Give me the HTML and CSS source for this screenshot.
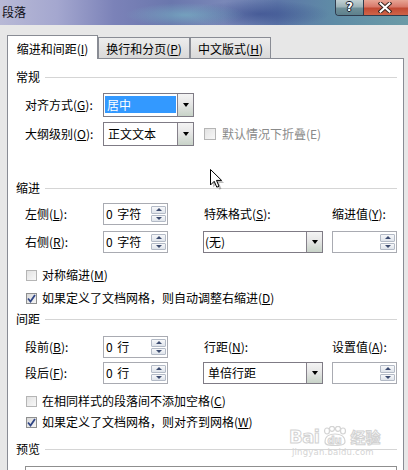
FILE: index.html
```html
<!DOCTYPE html>
<html lang="zh-CN">
<head>
<meta charset="utf-8">
<title>段落</title>
<link rel="stylesheet" href="styles.css">
</head>
<body>
<div class="titlebar">
  <span class="title">段落</span>
  <div class="controls">
    <div class="btn-help">?</div>
    <div class="btn-close">
      <svg width="14" height="11" viewBox="0 0 14 11">
        <path d="M2.5 1.5 L11.5 9.5 M11.5 1.5 L2.5 9.5" stroke="#3a2620" stroke-width="4" stroke-linecap="square"/>
        <path d="M2.5 1.5 L11.5 9.5 M11.5 1.5 L2.5 9.5" stroke="#fff" stroke-width="2" stroke-linecap="square"/>
      </svg>
    </div>
  </div>
</div>
<div class="client">
  <div class="tabs">
    <div class="tab active t1">缩进和间距(<u>I</u>)</div>
    <div class="tab t2">换行和分页(<u>P</u>)</div>
    <div class="tab t3">中文版式(<u>H</u>)</div>
  </div>
  <div class="panel">
    <div class="group g1"><span>常规</span></div>
    <div class="row r1">
      <span class="lbl">对齐方式(<u>G</u>):</span>
      <div class="combo w91"><span class="val selected">居中</span><span class="drop"><i></i></span></div>
    </div>
    <div class="row r2">
      <span class="lbl">大纲级别(<u>O</u>):</span>
      <div class="combo w91"><span class="val">正文文本</span><span class="drop"><i></i></span></div>
      <span class="cb disabled"></span>
      <span class="cbtext dis">默认情况下折叠(E)</span>
    </div>

    <div class="group g2"><span>缩进</span></div>
    <div class="fields f1">
      <span class="lbl">左侧(<u>L</u>):</span>
      <div class="spin"><span class="sv">0 字符</span><span class="sb"><b class="up"><i></i></b><b class="dn"><i></i></b></span></div>
      <span class="lbl c3">特殊格式(<u>S</u>):</span>
      <span class="lbl">缩进值(<u>Y</u>):</span>
      <span class="lbl">右侧(<u>R</u>):</span>
      <div class="spin"><span class="sv">0 字符</span><span class="sb"><b class="up"><i></i></b><b class="dn"><i></i></b></span></div>
      <div class="combo w120"><span class="val">(无)</span><span class="drop"><i></i></span></div>
      <div class="spin"><span class="sv"></span><span class="sb"><b class="up"><i></i></b><b class="dn"><i></i></b></span></div>
    </div>
    <div class="check c1"><span class="cb disabled"></span><span class="cbtext">对称缩进(<u>M</u>)</span></div>
    <div class="check c2"><span class="cb checked"><svg width="9" height="9" viewBox="0 0 9 9"><path d="M1 4.5 L3.5 7.5 L8 1" fill="none" stroke="#2f4585" stroke-width="1.8"/></svg></span><span class="cbtext">如果定义了文档网格，则自动调整右缩进(<u>D</u>)</span></div>

    <div class="group g3"><span>间距</span></div>
    <div class="fields f2">
      <span class="lbl">段前(<u>B</u>):</span>
      <div class="spin"><span class="sv">0 行</span><span class="sb"><b class="up"><i></i></b><b class="dn"><i></i></b></span></div>
      <span class="lbl c3">行距(<u>N</u>):</span>
      <span class="lbl">设置值(<u>A</u>):</span>
      <span class="lbl">段后(<u>F</u>):</span>
      <div class="spin"><span class="sv">0 行</span><span class="sb"><b class="up"><i></i></b><b class="dn"><i></i></b></span></div>
      <div class="combo w120"><span class="val v2">单倍行距</span><span class="drop"><i></i></span></div>
      <div class="spin"><span class="sv"></span><span class="sb"><b class="up"><i></i></b><b class="dn"><i></i></b></span></div>
    </div>
    <div class="check c3b"><span class="cb disabled"></span><span class="cbtext">在相同样式的段落间不添加空格(<u>C</u>)</span></div>
    <div class="check c4"><span class="cb checked"><svg width="9" height="9" viewBox="0 0 9 9"><path d="M1 4.5 L3.5 7.5 L8 1" fill="none" stroke="#2f4585" stroke-width="1.8"/></svg></span><span class="cbtext">如果定义了文档网格，则对齐到网格(<u>W</u>)</span></div>

    <div class="group g4"><span>预览</span></div>
    <div class="preview"></div>
  </div>
</div>

<svg class="cursor" width="16" height="22" viewBox="0 0 16 22">
  <path d="M2.5 2.5 L2.5 18 L6.2 14.3 L8.8 20.2 L11 19.2 L8.5 13.4 L13.6 13.4 Z" fill="#000" opacity="0.25" transform="translate(1.5,1.5)"/>
  <path d="M1.5 1.5 L1.5 17 L5.2 13.3 L7.8 19.2 L10 18.2 L7.5 12.4 L12.6 12.4 Z" fill="#fff" stroke="#000" stroke-width="1" stroke-linejoin="miter"/>
</svg>

<div class="watermark">
  <div class="wm-top">
    <span class="wm-bai">Bai</span>
    <span class="wm-paw">
      <svg width="28" height="20" viewBox="0 0 28 20">
        <g fill="#fff" stroke="#d4d4d4" stroke-width="1.2">
          <ellipse cx="6" cy="5" rx="2.5" ry="3"/>
          <ellipse cx="11" cy="2.8" rx="2.5" ry="2.5"/>
          <ellipse cx="17" cy="2.8" rx="2.5" ry="2.5"/>
          <ellipse cx="22" cy="5" rx="2.5" ry="3"/>
          <path d="M4 16 C4 10 9 8 14 8 C19 8 24 10 24 16 C24 19 20 19.5 14 19.5 C8 19.5 4 19 4 16 Z"/>
        </g>
      </svg>
      <span class="wm-du">du</span>
    </span>
    <span class="wm-jy">经验</span>
  </div>
  <div class="wm-url">jingyan.baidu.com</div>
</div>
</body>
</html>
```

FILE: styles.css
```css
* { box-sizing: border-box; }
html, body { margin: 0; padding: 0; }
body {
  width: 408px;
  height: 470px;
  overflow: hidden;
  position: relative;
  background: #e7e7e7;
  font-family: "Noto Sans CJK SC", "Noto Sans", sans-serif;
  font-size: 12px;
  color: #000;
}
u { text-decoration: underline; text-underline-offset: 1px; }

/* title bar */
.titlebar {
  height: 25px;
  display: flex;
  align-items: flex-start;
  background:
    radial-gradient(ellipse 60px 12px at 185px 15px, rgba(120,190,200,0.55), rgba(120,190,200,0) 100%),
    radial-gradient(ellipse 70px 14px at 260px 14px, rgba(40,60,130,0.5), rgba(40,60,130,0) 100%),
    linear-gradient(90deg, #b8b9d6 0%, #a4a7cf 14%, #7b82b8 28%, #6a77ad 42%, #7a88b8 55%, #5d76a8 68%, #5f8ca6 82%, #6b9ba7 100%);
}
.title {
  line-height: 24px;
  padding-left: 2px;
  color: #101018;
  font-size: 12px;
}
.controls {
  margin-left: auto;
  display: flex;
  height: 16px;
  border: 1px solid #2f3b4d;
  border-top: none;
  border-right: none;
  border-radius: 0 0 0 4px;
  overflow: hidden;
}
.btn-help {
  width: 28px;
  background: linear-gradient(#c1d0d3 0%, #9db3b8 45%, #6f8f98 55%, #5d808c 100%);
  color: #fff;
  font-family: "DejaVu Sans", sans-serif;
  font-weight: bold;
  font-size: 12px;
  text-align: center;
  line-height: 15px;
  text-shadow: 0 0 1px #1a2230, 1px 0 0 #1a2230, -1px 0 0 #1a2230, 0 1px 0 #1a2230, 0 -1px 0 #1a2230;
  border-right: 1px solid #2f3b4d;
}
.btn-close {
  width: 44px;
  background: linear-gradient(#e7a595 0%, #d8796a 45%, #c24a34 55%, #cf6448 100%);
  display: flex;
  align-items: center;
  justify-content: center;
  padding-right: 2px;
}

/* client area */
.client {
  padding: 10px 0 0 7px;
}
.tabs {
  display: flex;
  align-items: flex-end;
  height: 23px;
  position: relative;
  z-index: 1;
}
.tab {
  height: 21px;
  border: 1px solid #898c94;
  border-bottom: none;
  background: linear-gradient(#ededed, #d9d9d9);
  display: flex;
  align-items: center;
  justify-content: center;
  line-height: 14px;
  padding-top: 2px;
}
.tab.active {
  height: 24px;
  margin-bottom: -1px;
  background: #fff;
  padding-top: 3px;
}
.t1 { width: 91px; }
.t2 { width: 92px; }
.t3 { width: 81px; }

.panel {
  width: 397px;
  height: 412px;
  overflow: hidden;
  background: #fff;
  border: 1px solid #898c94;
  border-bottom: none;
  padding: 11px 6px 0 8px;
}

.group {
  display: flex;
  align-items: center;
  height: 14px;
  line-height: 14px;
}
.group::after {
  content: "";
  flex: 1;
  height: 1px;
  background: #d5d5d5;
  margin-left: 5px;
}
.g2 { margin-top: 35px; }
.g3 { margin-top: 8px; }
.g4 { margin-top: 14px; }

.row {
  display: flex;
  align-items: center;
  padding-left: 9px;
  height: 24px;
}
.r1 { margin-top: 9px; }
.r2 { margin-top: 5px; }
.row .lbl { width: 78px; flex: none; }
.lbl { line-height: 22px; white-space: nowrap; }

/* combo box */
.combo {
  display: flex;
  height: 24px;
  border: 1px solid #7f7b85;
  background: #fff;
  flex: none;
}
.fields .combo { height: 22px; }
.w91 { width: 91px; }
.w120 { width: 120px; }
.combo .val {
  flex: 1;
  line-height: 17px;
  margin: 2px 1px 3px 1px;
  padding-left: 3px;
  white-space: nowrap;
}
.fields .combo .val { margin: 1px 1px 2px 0; padding-left: 1px; }
.fields .combo .v2 { padding-left: 4px; }
.combo .val.selected {
  background: #3399ff;
  color: #fff;
  padding-left: 2px;
}
.combo .drop {
  width: 16px;
  border-left: 1px solid #85808a;
  background: linear-gradient(#f4f4f4 0%, #e6e6e6 45%, #c8d3c8 100%);
  display: flex;
  align-items: center;
  justify-content: center;
}
.combo .drop i {
  width: 0;
  height: 0;
  border-left: 3.5px solid transparent;
  border-right: 3.5px solid transparent;
  border-top: 4px solid #000;
  margin-top: -1px;
}

/* checkbox */
.cb {
  width: 11px;
  height: 11px;
  border: 1px solid #8e8f8f;
  background: linear-gradient(135deg, #d8d8d8, #f6f6f6);
  display: flex;
  align-items: center;
  justify-content: center;
  flex: none;
}
.cb.disabled {
  border-color: #b5b5b5;
  background: linear-gradient(135deg, #e2e2e2, #f8f8f8);
}
.r2 .cb { margin-left: 10px; width: 12px; height: 12px; }
.cbtext { margin-left: 5px; line-height: 14px; white-space: nowrap; }
.cbtext.dis { color: #8a8a8a; margin-left: 6px; }

.check {
  display: flex;
  align-items: center;
  height: 12px;
  padding-left: 10px;
}
.c1 { margin-top: 16px; }
.c2 { margin-top: 11px; }
.c3b { margin-top: 11px; }
.c4 { margin-top: 9px; }

/* field grids */
.fields {
  display: grid;
  grid-template-columns: 78px 100px 129px 65px;
  grid-auto-rows: 22px;
  padding-left: 9px;
  align-items: center;
}
.f1 { margin-top: 8px; row-gap: 6px; }
.f2 { margin-top: 10px; row-gap: 4px; }
.fields .c3 { padding-left: 1px; }

.spin {
  width: 65px;
  height: 22px;
  border: 1px solid #a9abb2;
  background: #fff;
  display: flex;
  align-items: center;
  padding: 0 1px 0 2px;
}
.spin .sv { flex: 1; line-height: 16px; white-space: pre; word-spacing: 2px; }
.spin .sb {
  display: flex;
  flex-direction: column;
  width: 15px;
  height: 16px;
  gap: 1px;
}
.spin .sb b {
  flex: 1;
  border: 1px solid #b3bac6;
  border-radius: 1px;
  background: linear-gradient(#f7f8fa, #dfe4eb);
  display: flex;
  align-items: center;
  justify-content: center;
}
.spin .up i {
  width: 0; height: 0;
  border-left: 3px solid transparent;
  border-right: 3px solid transparent;
  border-bottom: 3px solid #3d4c70;
}
.spin .dn i {
  width: 0; height: 0;
  border-left: 3px solid transparent;
  border-right: 3px solid transparent;
  border-top: 3px solid #3d4c70;
}

.preview {
  margin-top: 10px;
  margin-left: 9px;
  width: 372px;
  height: 4px;
  border: 1px solid #8f8f8f;
  border-bottom: none;
}

/* overlays */
.cursor {
  position: absolute;
  left: 209px;
  top: 168px;
}
.watermark {
  position: absolute;
  left: 289px;
  top: 426px;
  width: 94px;
}
.wm-top {
  display: flex;
  align-items: flex-end;
  height: 20px;
}
.wm-bai, .wm-du, .wm-jy {
  font-family: "DejaVu Sans", sans-serif;
  font-weight: bold;
  color: #fff;
  -webkit-text-stroke: 1px #d2d2d2;
}
.wm-bai { font-size: 18px; line-height: 18px; letter-spacing: -0.5px; }
.wm-paw {
  position: relative;
  width: 30px;
  height: 20px;
  display: flex;
  justify-content: center;
  align-items: flex-end;
}
.wm-paw svg { position: absolute; left: 1px; top: 0; }
.wm-du { position: relative; font-size: 10px; line-height: 11px; }
.wm-jy {
  font-family: "Noto Sans CJK SC", sans-serif;
  font-size: 15px;
  line-height: 18px;
  margin-left: 1px;
}
.wm-url {
  font-family: "DejaVu Sans", sans-serif;
  font-size: 8.5px;
  line-height: 9px;
  color: #d4d4d4;
  margin-top: 2px;
  padding-left: 3px;
  letter-spacing: 0.2px;
}
```
